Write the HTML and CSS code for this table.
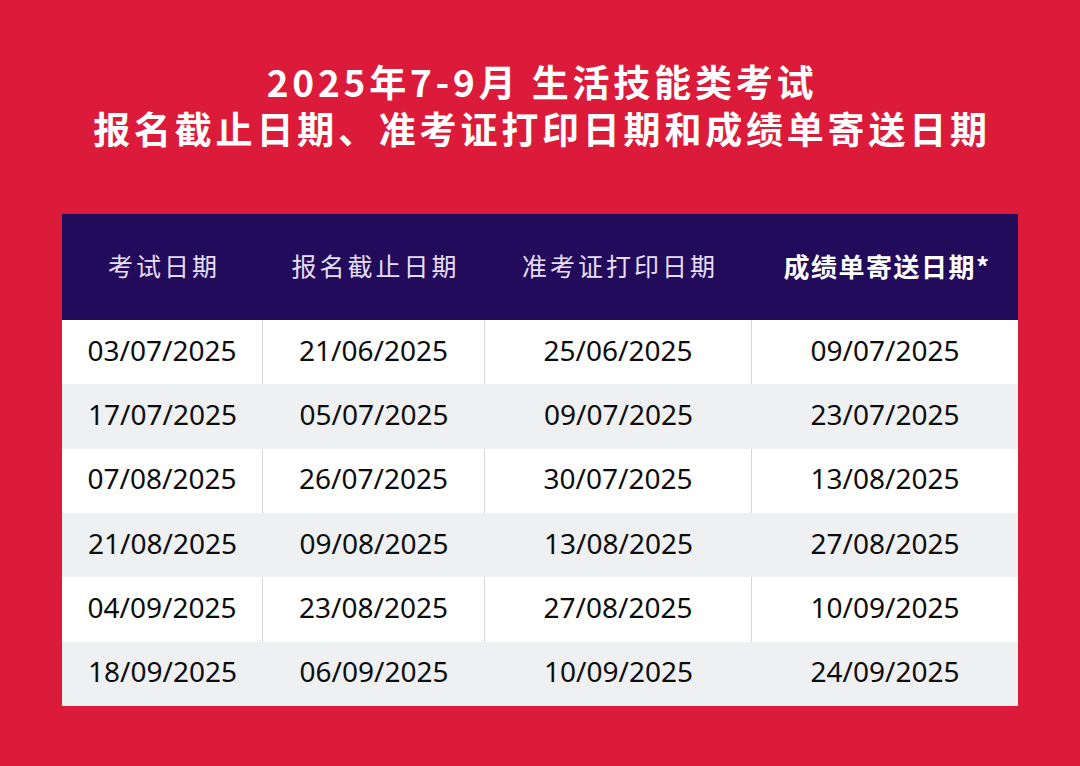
FILE: index.html
```html
<!DOCTYPE html>
<html lang="zh-CN">
<head>
<meta charset="utf-8">
<link rel="stylesheet" href="styles.css">
</head>
<body>
<div class="page">
  <h1 class="title">
    <span class="line">2025年7-9月 生活技能类考试</span>
    <span class="line">报名截止日期、准考证打印日期和成绩单寄送日期</span>
  </h1>
  <div class="table">
    <div class="head">考试日期</div>
    <div class="head">报名截止日期</div>
    <div class="head">准考证打印日期</div>
    <div class="head strong">成绩单寄送日期*</div>

    <div class="cell w">03/07/2025</div><div class="cell w">21/06/2025</div><div class="cell w">25/06/2025</div><div class="cell w last">09/07/2025</div>
    <div class="cell g">17/07/2025</div><div class="cell g">05/07/2025</div><div class="cell g">09/07/2025</div><div class="cell g last">23/07/2025</div>
    <div class="cell w">07/08/2025</div><div class="cell w">26/07/2025</div><div class="cell w">30/07/2025</div><div class="cell w last">13/08/2025</div>
    <div class="cell g">21/08/2025</div><div class="cell g">09/08/2025</div><div class="cell g">13/08/2025</div><div class="cell g last">27/08/2025</div>
    <div class="cell w">04/09/2025</div><div class="cell w">23/08/2025</div><div class="cell w">27/08/2025</div><div class="cell w last">10/09/2025</div>
    <div class="cell g">18/09/2025</div><div class="cell g">06/09/2025</div><div class="cell g">10/09/2025</div><div class="cell g last">24/09/2025</div>
  </div>
</div>
</body>
</html>
```
FILE: styles.css
```css
html, body {
  margin: 0;
  padding: 0;
}
body {
  background: #dc1a3a;
  width: 1080px;
  height: 766px;
  overflow: hidden;
}
.page {
  padding-top: 58px;
}
.title {
  margin: 0;
  display: flex;
  flex-direction: column;
  align-items: center;
  color: #ffffff;
  font-family: "Noto Sans CJK SC", "Noto Sans", sans-serif;
  font-weight: 700;
  font-size: 37px;
  line-height: 47px;
  letter-spacing: 3.8px;
}
.title .line {
  padding-left: 4px;
}
.table {
  margin: 62px 0 0 62px;
  width: 956px;
  display: grid;
  grid-template-columns: 201px 222px 267px 266px;
  grid-template-rows: 106px repeat(6, 64.33px);
}
.head {
  background: #230b5b;
  color: #e6def4;
  display: flex;
  align-items: center;
  justify-content: center;
  font-family: "Noto Sans CJK SC", sans-serif;
  font-weight: 400;
  font-size: 25px;
  letter-spacing: 3px;
  padding-bottom: 4px;
  padding-left: 3px;
}
.head.strong {
  color: #ffffff;
  font-weight: 700;
  font-size: 26px;
  letter-spacing: 1.5px;
  padding-left: 4px;
}
.cell {
  display: flex;
  align-items: center;
  justify-content: center;
  font-family: "Noto Sans", "Open Sans", sans-serif;
  font-size: 28px;
  color: #0d0d0d;
  padding-bottom: 5px;
}
.cell.w {
  background: #ffffff;
  border-right: 1px solid #d6d6d6;
}
.cell.g {
  background: #eef0f2;
}
.cell.last {
  border-right: none;
}
```
